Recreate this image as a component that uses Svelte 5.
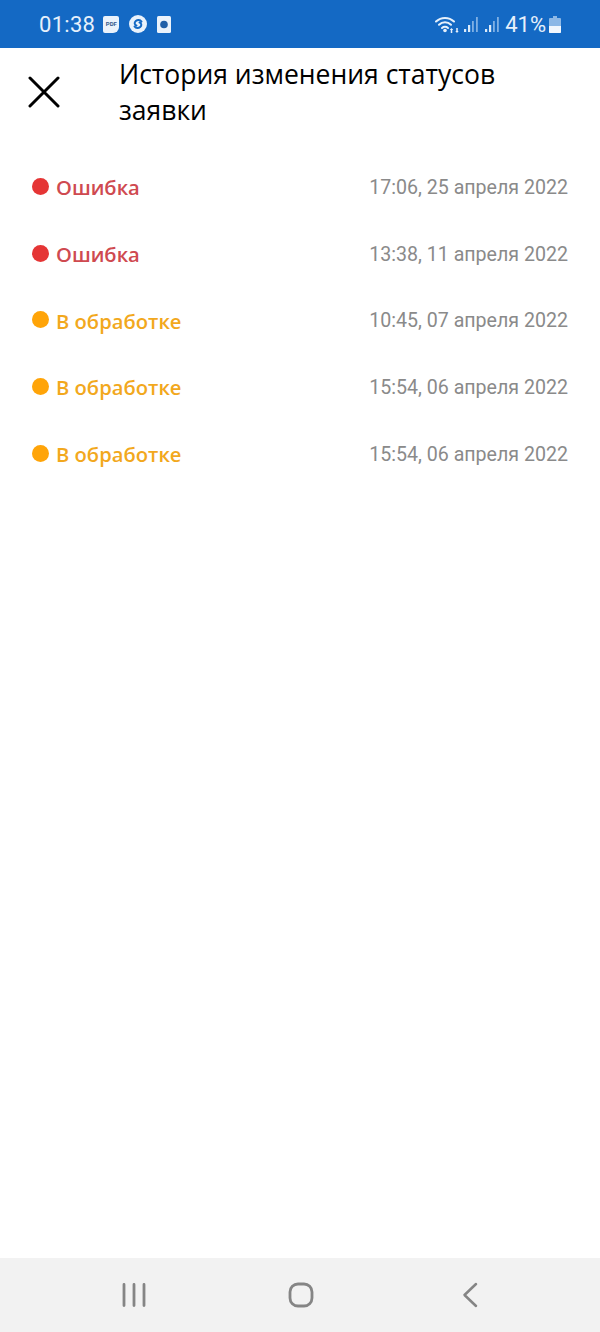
<script lang="ts">
	const rows = [
		{ label: 'Ошибка', kind: 'error', date: '17:06, 25 апреля 2022' },
		{ label: 'Ошибка', kind: 'error', date: '13:38, 11 апреля 2022' },
		{ label: 'В обработке', kind: 'pending', date: '10:45, 07 апреля 2022' },
		{ label: 'В обработке', kind: 'pending', date: '15:54, 06 апреля 2022' },
		{ label: 'В обработке', kind: 'pending', date: '15:54, 06 апреля 2022' }
	];
</script>

<div class="screen">
	<div class="statusbar">
		<div class="status-left">
			<span class="clock">01:38</span>
			<span class="pdf">PDF</span>
			<svg class="notif" width="18" height="18" viewBox="0 0 18 18">
				<circle cx="9" cy="9" r="9" fill="#eaf2fb" />
				<path d="M12.500 6.500C11 4.500 8.500 4.500 6.800 6 5 7.600 5.500 10 7.500 10.500M5.500 11.500C7 13.500 9.500 13.500 11.200 12 13 10.400 12.500 8 10.500 7.500" fill="none" stroke="#1469c4" stroke-width="2" stroke-linecap="round" />
			</svg>
			<svg class="notif" width="14" height="17" viewBox="0 0 14 17">
				<rect width="14" height="17" rx="1.500" fill="#eaf2fb" />
				<circle cx="7" cy="8.500" r="3.800" fill="#1f5fa8" />
			</svg>
		</div>
		<div class="status-right">
			<svg width="25" height="19" viewBox="0 0 25 19">
				<g fill="none" stroke="#e6f0fb" stroke-width="2" stroke-linecap="round">
					<path d="M1 6.500a13 13 0 0 1 18 0" />
					<path d="M4 9.800a8.600 8.600 0 0 1 12 0" />
					<path d="M7 13a4.400 4.400 0 0 1 6 0" />
				</g>
				<circle cx="10" cy="15.500" r="1.800" fill="#e6f0fb" />
				<path d="M16.500 18v-4M22 13v4" stroke="#e6f0fb" stroke-width="1.500" />
				<path d="M14.800 15l1.700-2 1.700 2M20.300 16l1.700 2 1.700-2" fill="#e6f0fb" />
			</svg>
			<svg class="bars" width="15" height="17" viewBox="0 0 15 17">
				<path d="M1 13h2.200v3H1zM5 9h2.200v7H5z" fill="#dcebfa" />
				<path d="M9 5h1.800v11H9zM13 1h1.800v15H13z" fill="#7fb0e4" />
			</svg>
			<svg class="bars wide" width="15" height="17" viewBox="0 0 15 17">
				<path d="M1 13h2.200v3H1zM5 9h2.200v7H5z" fill="#dcebfa" />
				<path d="M9 5h1.800v11H9zM13 1h1.800v15H13z" fill="#7fb0e4" />
			</svg>
			<span class="pct">41%</span>
			<svg width="12" height="17" viewBox="0 0 12 17">
				<path d="M4 0h4v2h3a1 1 0 0 1 1 1v13a1 1 0 0 1-1 1H1a1 1 0 0 1-1-1V3a1 1 0 0 1 1-1h3z" fill="#8db8e6" />
				<path d="M0 10h12v6a1 1 0 0 1-1 1H1a1 1 0 0 1-1-1z" fill="#f2f7fd" />
			</svg>
		</div>
	</div>

	<header class="topbar">
		<button class="close" aria-label="Закрыть">
			<svg width="32" height="32" viewBox="0 0 32 32">
				<path d="M2 2l28 28M30 2 2 30" stroke="#000" stroke-width="3" stroke-linecap="round" />
			</svg>
		</button>
		<h1>История изменения статусов заявки</h1>
	</header>

	<ul class="list">
		{#each rows as row}
			<li>
				<span class="status {row.kind}"><i></i>{row.label}</span>
				<span class="date">{row.date}</span>
			</li>
		{/each}
	</ul>

	<nav class="navbar">
		<svg width="24" height="24" viewBox="0 0 24 24">
			<path d="M2 1.500v21M12 1.500v21M22 1.500v21" stroke="#858585" stroke-width="2.800" stroke-linecap="round" fill="none" />
		</svg>
		<svg class="home" width="26" height="26" viewBox="0 0 26 26">
			<rect x="2" y="2" width="22" height="22" rx="8" stroke="#858585" stroke-width="2.800" fill="none" />
		</svg>
		<svg width="16" height="26" viewBox="0 0 16 26">
			<path d="M14 2 2.500 13 14 24" stroke="#858585" stroke-width="2.500" stroke-linecap="round" stroke-linejoin="round" fill="none" />
		</svg>
	</nav>
</div>

<style>
	:global(body) {
		margin: 0;
		background: #fff;
	}

	.screen {
		height: 1332px;
		display: flex;
		flex-direction: column;
		font-family: 'Open Sans', sans-serif;
	}

	.statusbar {
		height: 48px;
		background: #1469c4;
		color: #e6f0fb;
		display: flex;
		align-items: center;
		justify-content: space-between;
		padding: 0 39px;
		font-family: Roboto, sans-serif;
		flex: none;
	}

	.status-left,
	.status-right {
		display: flex;
		align-items: center;
	}

	.clock {
		font-size: 22px;
		margin-right: 8px;
		letter-spacing: 0.3px;
	}

	.pdf {
		width: 16px;
		height: 17px;
		background: #eaf2fb;
		border-radius: 2px 2px 6px 2px;
		color: #33598c;
		font-size: 6px;
		font-weight: 700;
		line-height: 16px;
		text-align: center;
		margin-right: 10px;
	}

	.notif {
		margin-right: 10px;
	}

	.notif:last-child {
		margin-right: 0;
	}

	.bars {
		margin-left: 3px;
	}

	.bars.wide {
		margin-left: 6px;
	}

	.pct {
		font-size: 22px;
		margin: 0 3px 0 6px;
	}

	.topbar {
		display: flex;
		align-items: flex-start;
		padding: 8px 70px 0 28px;
		flex: none;
	}

	.close {
		border: 0;
		background: none;
		padding: 0;
		margin: 20px 59px 0 0;
		width: 32px;
		height: 32px;
		flex: none;
		display: block;
	}

	.close svg {
		display: block;
	}

	h1 {
		margin: 0;
		font-size: 26.500px;
		line-height: 36px;
		font-weight: 400;
		color: #000;
	}

	.list {
		list-style: none;
		margin: 26px 0 0;
		padding: 0 32px;
		flex: 1;
	}

	li {
		height: 66.700px;
		display: flex;
		align-items: center;
		justify-content: space-between;
	}

	.status {
		display: flex;
		align-items: center;
		font-size: 20.200px;
		font-weight: 600;
	}

	.status i {
		width: 17px;
		height: 17px;
		border-radius: 50%;
		margin-right: 7px;
		margin-top: -2px;
	}

	.error {
		color: #cf4a50;
	}

	.error i {
		background: #e53535;
	}

	.pending {
		color: #f2a81d;
	}

	.pending i {
		background: #ffa408;
	}

	.date {
		font-family: Roboto, sans-serif;
		font-size: 19.600px;
		color: #8a8a8a;
	}

	.navbar {
		height: 74px;
		background: #f2f2f2;
		display: flex;
		align-items: center;
		flex: none;
		padding: 0 122px;
		justify-content: space-between;
	}

	.home {
		margin-right: 6px;
	}
</style>
